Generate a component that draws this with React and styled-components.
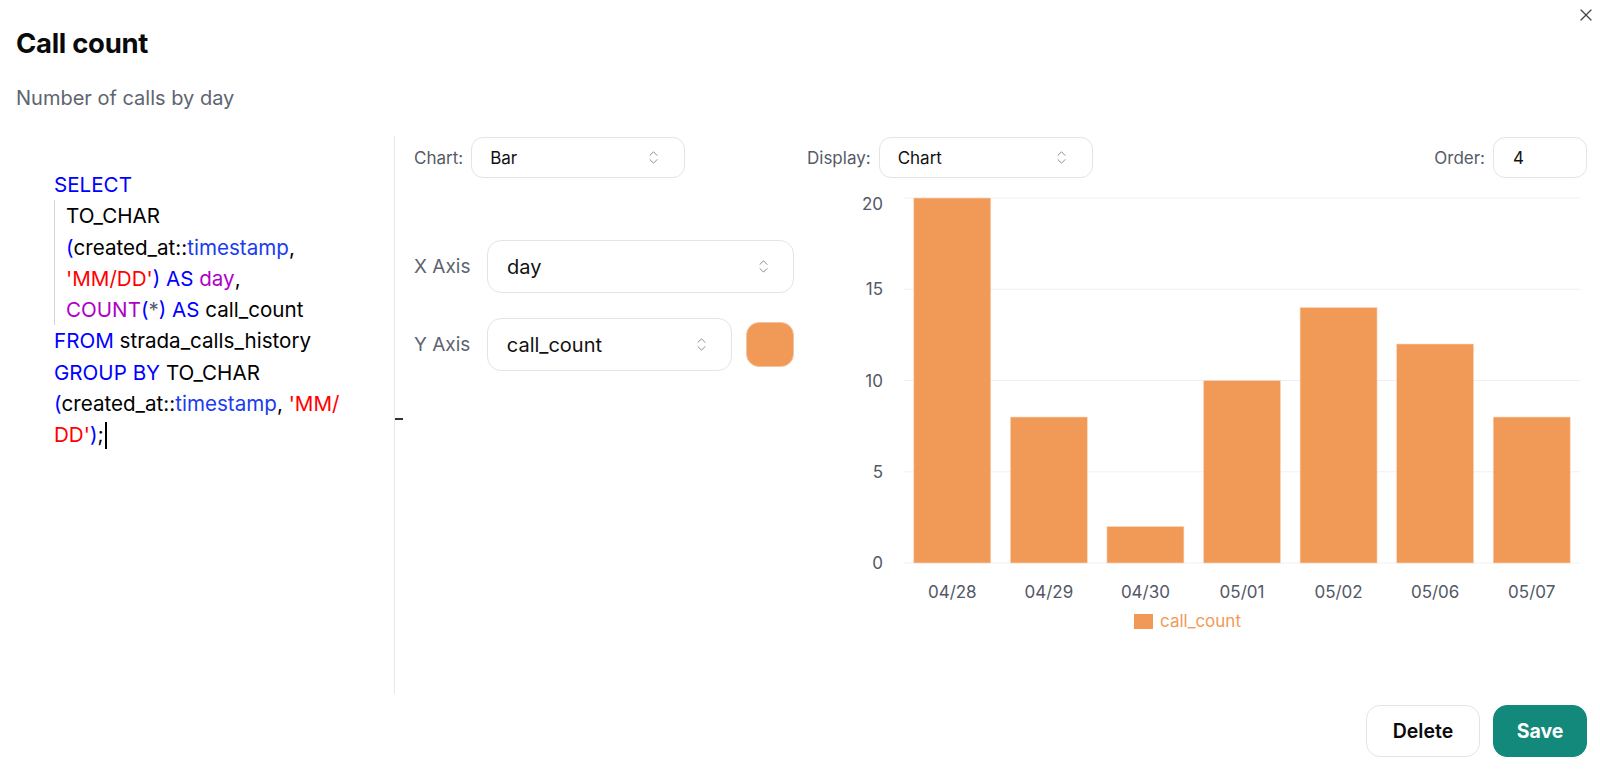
import React from "react";
import styled, { createGlobalStyle } from "styled-components";
import { ChevronsUpDown, X } from "lucide-react";

const GlobalStyle = createGlobalStyle`
  html, body {
    margin: 0;
    padding: 0;
    background: #fff;
    font-family: Inter, "Liberation Sans", sans-serif;
    color: #111;
  }
`;

const data = [
  { day: "04/28", value: 20 },
  { day: "04/29", value: 8 },
  { day: "04/30", value: 2 },
  { day: "05/01", value: 10 },
  { day: "05/02", value: 14 },
  { day: "05/06", value: 12 },
  { day: "05/07", value: 8 },
];

const BAR_COLOR = "#f19a58";

const sqlTop = [[["SELECT", "kw"]]];
const sqlBlock = [
  [["TO_CHAR", "txt"]],
  [["(", "kw"], ["created_at::", "txt"], ["timestamp", "type"], [",", "txt"]],
  [["'MM/DD'", "str"], [") AS ", "kw"], ["day", "fn"], [",", "txt"]],
  [["COUNT", "fn"], ["(", "kw"], ["*", "op"], [") AS ", "kw"], ["call_count", "txt"]],
];
const sqlBottom = [
  [["FROM", "kw"], [" strada_calls_history", "txt"]],
  [["GROUP BY", "kw"], [" TO_CHAR", "txt"]],
  [["(", "kw"], ["created_at::", "txt"], ["timestamp", "type"], [", ", "txt"], ["'MM/", "str"]],
  [["DD'", "str"], [")", "kw"], [";", "txt"]],
];

const tokenColors = {
  kw: "#0000ff",
  type: "#1a3cf0",
  str: "#ff0000",
  fn: "#b000c8",
  op: "#5a5a78",
  txt: "#000000",
};

export default function App() {
  const renderLine = (line, i, last) => (
    <CodeLine key={i}>
      {line.map(([text, kind], j) => (
        <Token key={j} $kind={kind}>
          {text}
        </Token>
      ))}
      {last && <Caret />}
    </CodeLine>
  );

  return (
    <>
      <GlobalStyle />
      <Page>
        <CloseButton aria-label="Close">
          <X size={20} strokeWidth={1.5} />
        </CloseButton>
        <Header>
          <Title>Call count</Title>
          <Subtitle>Number of calls by day</Subtitle>
        </Header>

        <Body>
          <CodePanel>
            {sqlTop.map((l, i) => renderLine(l, i))}
            <IndentBlock>{sqlBlock.map((l, i) => renderLine(l, i))}</IndentBlock>
            {sqlBottom.map((l, i) => renderLine(l, i, i === sqlBottom.length - 1))}
          </CodePanel>

          <ConfigPanel>
            <ResizeMark />
            <LeftColumn>
              <InlineField>
                <SmallLabel>Chart:</SmallLabel>
                <Select $width={214} $height={41}>
                  <span>Bar</span>
                  <UpDown />
                </Select>
              </InlineField>

              <AxisList>
                <AxisRow>
                  <AxisLabel>X Axis</AxisLabel>
                  <Select $width={307} $height={53} $big>
                    <span>day</span>
                    <UpDown />
                  </Select>
                </AxisRow>
                <AxisRow>
                  <AxisLabel>Y Axis</AxisLabel>
                  <Select $width={246} $height={53} $big>
                    <span>call_count</span>
                    <UpDown />
                  </Select>
                  <Swatch $color={BAR_COLOR} />
                </AxisRow>
              </AxisList>
            </LeftColumn>

            <RightColumn>
              <TopRow>
                <InlineField>
                  <SmallLabel>Display:</SmallLabel>
                  <Select $width={214} $height={41}>
                    <span>Chart</span>
                    <UpDown />
                  </Select>
                </InlineField>
                <InlineField>
                  <SmallLabel>Order:</SmallLabel>
                  <NumberInput>4</NumberInput>
                </InlineField>
              </TopRow>
              <BarChart data={data} />
            </RightColumn>
          </ConfigPanel>
        </Body>

        <Footer>
          <GhostButton>Delete</GhostButton>
          <PrimaryButton>Save</PrimaryButton>
        </Footer>
      </Page>
    </>
  );
}

function UpDown() {
  return <ChevronsUpDown size={17} strokeWidth={1.3} color="#7d828c" />;
}

function BarChart({ data }) {
  const left = 97;
  const right = 773;
  const top = 10;
  const bottom = 375;
  const max = 20;
  const step = (right - left) / data.length;
  const barW = 77;
  const y = (v) => bottom - (v / max) * (bottom - top);
  const ticks = [0, 5, 10, 15, 20];

  return (
    <ChartSvg width="780" height="450" viewBox="0 0 780 450">
      {ticks.map((t) => (
        <g key={t}>
          <line x1={left} x2={right} y1={y(t)} y2={y(t)} stroke="#eef0f4" strokeWidth="1" />
          <text x="76" y={y(t) + (t === max ? 12 : 6)} textAnchor="end" fontSize="17" fill="#525866">
            {t}
          </text>
        </g>
      ))}
      {data.map((d, i) => {
        const cx = left + step * i + step / 2;
        return (
          <g key={d.day}>
            <rect x={cx - barW / 2} y={y(d.value)} width={barW} height={bottom - y(d.value)} fill={BAR_COLOR} stroke="#fbd9bf" strokeWidth="0.6" />
            <text x={cx} y="410" textAnchor="middle" fontSize="17" fill="#525866">
              {d.day}
            </text>
          </g>
        );
      })}
      <rect x="327" y="426" width="19" height="15" fill={BAR_COLOR} />
      <text x="353" y="439" fontSize="17" fill={BAR_COLOR}>
        call_count
      </text>
    </ChartSvg>
  );
}

const Page = styled.div`
  position: relative;
  width: 1600px;
  height: 770px;
  display: flex;
  flex-direction: column;
  box-sizing: border-box;
  overflow: hidden;
`;

const CloseButton = styled.button`
  position: absolute;
  top: 4px;
  right: 3px;
  width: 22px;
  height: 22px;
  padding: 0;
  border: none;
  background: transparent;
  color: #444;
  display: flex;
  align-items: center;
  justify-content: center;
`;

const Header = styled.div`
  padding: 27px 16px 0;
  height: 136px;
  box-sizing: border-box;
`;

const Title = styled.h1`
  margin: 0;
  font-size: 27.5px;
  line-height: 32px;
  font-weight: 700;
  letter-spacing: -0.3px;
  color: #0a0a0a;
`;

const Subtitle = styled.p`
  margin: 27px 0 0;
  font-size: 20px;
  line-height: 24px;
  color: #5d6470;
`;

const Body = styled.div`
  display: grid;
  grid-template-columns: 394px 1fr;
  height: 558px;
`;

const CodePanel = styled.div`
  padding: 33px 0 0 54px;
  font-size: 20.6px;
  line-height: 31.3px;
`;

const CodeLine = styled.div`
  white-space: pre;
  display: flex;
  align-items: center;
`;

const Token = styled.span`
  color: ${(p) => tokenColors[p.$kind]};
`;

const Caret = styled.span`
  display: inline-block;
  width: 2px;
  height: 27px;
  margin-left: 1px;
  background: #000;
`;

const IndentBlock = styled.div`
  border-left: 1px solid #d4d4d8;
  padding-left: 11px;
`;

const ConfigPanel = styled.div`
  position: relative;
  border-left: 1px solid #e7e8ec;
  padding: 1px 13px 0 19px;
  display: grid;
  grid-template-columns: 380px 1fr;
  column-gap: 13px;
`;

const ResizeMark = styled.div`
  position: absolute;
  left: 0;
  top: 282px;
  width: 8px;
  height: 2px;
  background: #333;
`;

const LeftColumn = styled.div`
  display: flex;
  flex-direction: column;
`;

const RightColumn = styled.div`
  display: flex;
  flex-direction: column;
`;

const InlineField = styled.div`
  display: flex;
  align-items: center;
  gap: 8px;
`;

const SmallLabel = styled.span`
  font-size: 17px;
  color: #555b66;
`;

const Select = styled.div`
  width: ${(p) => p.$width}px;
  height: ${(p) => p.$height}px;
  box-sizing: border-box;
  border: 1px solid #e3e4e8;
  border-radius: ${(p) => (p.$big ? 14 : 12)}px;
  display: flex;
  align-items: center;
  justify-content: space-between;
  padding: ${(p) => (p.$big ? "0 21px 0 19px" : "0 22px 0 18px")};
  font-size: ${(p) => (p.$big ? 20 : 17)}px;
  color: #111;
  background: #fff;
`;

const AxisList = styled.div`
  margin-top: 62px;
  display: flex;
  flex-direction: column;
  gap: 25px;
`;

const AxisRow = styled.div`
  display: flex;
  align-items: center;
`;

const AxisLabel = styled.span`
  width: 73px;
  font-size: 19px;
  color: #5d6470;
`;

const Swatch = styled.div`
  margin-left: 14px;
  width: 48px;
  height: 45px;
  border-radius: 13px;
  background: ${(p) => p.$color};
  border: 1px solid #f4c4a0;
  box-sizing: border-box;
`;

const TopRow = styled.div`
  display: flex;
  align-items: center;
  justify-content: space-between;
  height: 41px;
`;

const NumberInput = styled.div`
  width: 94px;
  height: 41px;
  box-sizing: border-box;
  border: 1px solid #e3e4e8;
  border-radius: 12px;
  display: flex;
  align-items: center;
  padding-left: 19px;
  font-size: 17px;
`;

const ChartSvg = styled.svg`
  display: block;
  margin-top: 10px;
  font-family: Inter, "Liberation Sans", sans-serif;
`;

const Footer = styled.div`
  display: flex;
  justify-content: flex-end;
  align-items: flex-start;
  gap: 13px;
  padding: 11px 13px 0 0;
  flex: 1;
`;

const BaseButton = styled.button`
  height: 52px;
  border-radius: 14px;
  font-family: Inter, "Liberation Sans", sans-serif;
  font-size: 19.5px;
  font-weight: 600;
  box-sizing: border-box;
  cursor: pointer;
`;

const GhostButton = styled(BaseButton)`
  width: 114px;
  background: #fff;
  border: 1px solid #e3e4e8;
  color: #0a0a0a;
`;

const PrimaryButton = styled(BaseButton)`
  width: 94px;
  background: #12897a;
  border: 1px solid #12897a;
  color: #fff;
  font-weight: 700;
`;
